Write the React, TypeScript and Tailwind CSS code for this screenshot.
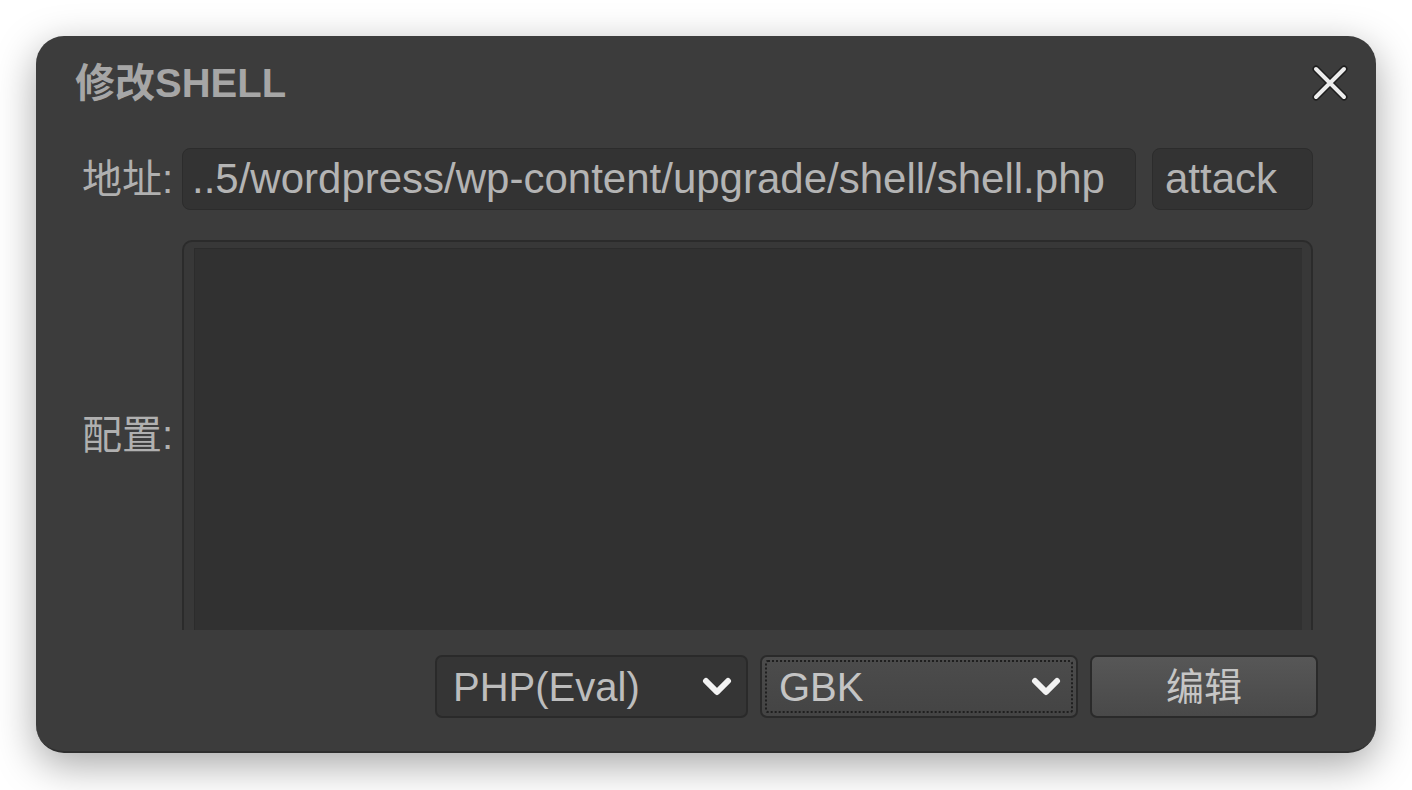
const latin = "font-['Liberation_Sans','Noto_Sans_CJK_SC',sans-serif]";

function Chevron() {
  return (
    <svg width="30" height="20" viewBox="0 0 30 20" className="shrink-0">
      <path d="M4 4 L15 15 L26 4" fill="none" stroke="#f2f2f2" strokeWidth="6" strokeLinecap="round" strokeLinejoin="round" />
    </svg>
  );
}

function CloseIcon() {
  return (
    <svg width="36" height="36" viewBox="0 0 36 36">
      <path d="M4 4 L32 32 M32 4 L4 32" stroke="#1e1e1e" strokeWidth="7" strokeLinecap="round" />
      <path d="M4 4 L32 32 M32 4 L4 32" stroke="#ececec" strokeWidth="4" strokeLinecap="round" />
    </svg>
  );
}

export default function App() {
  return (
    <div className={`w-full h-[790px] bg-white pt-[36px] pl-[36px] ${latin}`}>
      <div className="w-[1340px] h-[717px] rounded-[28px] bg-[#3c3c3c] border-b-2 border-[#2e2e2e] shadow-[0_12px_40px_rgba(0,0,0,0.35)] flex flex-col pl-[46px] pr-[63px]">
        {/* Title */}
        <div className="h-[94px] flex items-center justify-between -ml-[7px] -mr-[35px]">
          <h1 className="text-[40px] font-bold text-[#a6a6a6] leading-none">修改SHELL</h1>
          <button className="w-[36px] h-[36px] flex items-center justify-center">
            <CloseIcon />
          </button>
        </div>

        {/* Address */}
        <div className="mt-[18px] h-[62px] flex items-center gap-[10px]">
          <label className="w-[90px] shrink-0 whitespace-nowrap text-[40px] leading-none text-[#b0b0b0]">地址:</label>
          <div className="flex-1 h-full rounded-[8px] bg-[#333333] border border-[#2c2c2c] flex items-center px-[9px] overflow-hidden">
            <span className="text-[42px] leading-none text-[#b4b4b4] whitespace-nowrap">..5/wordpress/wp-content/upgrade/shell/shell.php</span>
          </div>
          <div className="w-[161px] h-full ml-[6px] rounded-[8px] bg-[#333333] border border-[#2c2c2c] flex items-center px-[12px]">
            <span className="text-[42px] leading-none text-[#b4b4b4]">attack</span>
          </div>
        </div>

        {/* Config */}
        <div className="mt-[30px] h-[390px] flex gap-[10px]">
          <div className="w-[90px] shrink-0 flex items-center">
            <label className="whitespace-nowrap text-[40px] leading-none text-[#b0b0b0]">配置:</label>
          </div>
          <div className="flex-1 h-full rounded-t-[10px] border-2 border-b-0 border-[#2b2b2b] bg-[#383838] pl-[10px] pr-[9px] pt-[6px] overflow-hidden">
            <div className="w-full h-full bg-[#313131] border-t border-l border-[#2c2c2c]"></div>
          </div>
        </div>

        {/* Bottom bar */}
        <div className="mt-[25px] h-[63px] flex justify-end gap-[12px] -mr-[5px]">
          <div className="w-[313px] h-full rounded-[7px] bg-[#353535] border-2 border-[#2a2a2a] flex items-center justify-between pl-[16px] pr-[14px]">
            <span className="text-[40px] leading-none text-[#bdbdbd]">PHP(Eval)</span>
            <Chevron />
          </div>
          <div className="w-[318px] h-full rounded-[7px] bg-gradient-to-b from-[#4c4c4c] to-[#444444] border-2 border-[#2a2a2a] p-[3px]">
            <div className="w-full h-full border-2 border-dotted border-[#1f1f1f] rounded-[3px] flex items-center justify-between pl-[12px] pr-[10px]">
              <span className="text-[40px] leading-none text-[#c4c4c4]">GBK</span>
              <Chevron />
            </div>
          </div>
          <button className="w-[228px] h-full rounded-[7px] bg-gradient-to-b from-[#575757] to-[#494949] border-2 border-[#2a2a2a] flex items-center justify-center">
            <span className="text-[38px] leading-none text-[#c6c6c6]">编辑</span>
          </button>
        </div>
      </div>
    </div>
  );
}
